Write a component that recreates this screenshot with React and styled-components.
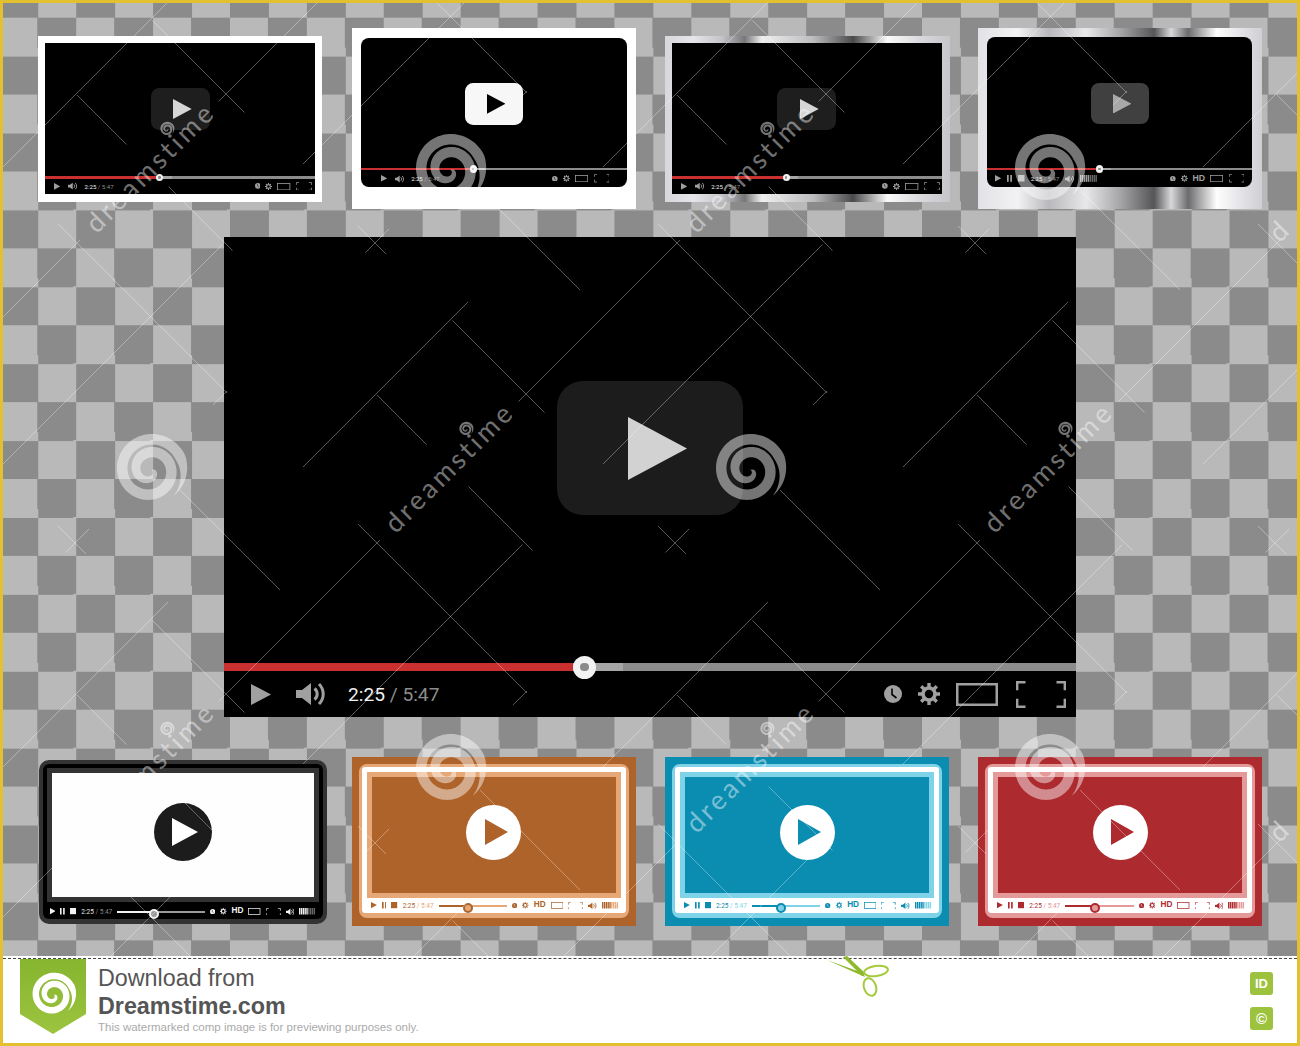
import React from "react";
import styled, { createGlobalStyle } from "styled-components";

const u = (n) => `calc(${n}px * var(--u))`;

const Global = createGlobalStyle`
  html, body { margin: 0; padding: 0; background: #fff; }
  * { box-sizing: border-box; }
`;

/* ---------- page ---------- */
const Page = styled.div`
  width: 1300px;
  height: 1046px;
  border: 3px solid #e3c02f;
  display: flex;
  flex-direction: column;
  background: #fff;
  font-family: "Liberation Sans", Arial, sans-serif;
  overflow: hidden;
`;
const Canvas = styled.main`
  position: relative;
  height: 953px;
  flex: none;
  padding-top: 25px;
  display: flex;
  flex-direction: column;
  overflow: hidden;
  background: repeating-conic-gradient(#8b8b8b 0 25%, #b9b9b9 0 50%) -3.7px 14.7px / 76.9px 76.9px;
`;
const TileRow = styled.section`
  display: grid;
  grid-template-columns: repeat(4, 313.33px);
  align-items: center;
  padding-left: ${(p) => p.$left}px;
  height: ${(p) => p.$h}px;
  margin-bottom: ${(p) => p.$after || 0}px;
  flex: none;
`;
const HeroSlot = styled.div`
  width: 852px;
  height: 480px;
  margin: 0 auto 40px;
  flex: none;
`;

/* ---------- top thumbnails ---------- */
const Frame = styled.div`
  width: ${(p) => p.$w}px;
  height: ${(p) => p.$h}px;
  padding: ${(p) => p.$pad};
  background: ${(p) => p.$bg};
`;

/* ---------- player ---------- */
const Player = styled.div`
  --u: ${(p) => p.$u};
  width: 100%;
  height: 100%;
  display: flex;
  flex-direction: column;
  background: #000;
  border-radius: ${(p) => p.$radius || 0}px;
  overflow: hidden;
`;
const Stage = styled.div`
  flex: 1;
  display: flex;
  align-items: center;
  justify-content: center;
  padding-top: ${(p) => u(p.$top || 0)};
  padding-bottom: ${u(4)};
`;
const BigButton = styled.div`
  width: ${u(186)};
  height: ${u(134)};
  border-radius: ${u(26)};
  background: ${(p) => p.$bg};
  color: ${(p) => p.$fg};
  display: flex;
  align-items: center;
  justify-content: center;
  padding-left: ${u(14)};
`;
const Track = styled.div`
  position: relative;
  flex: none;
  height: ${u(8)};
  background: #8c8c8c;
`;
const Buffered = styled.div`
  position: absolute;
  left: 0;
  top: 0;
  bottom: 0;
  width: 46.8%;
  background: #a6a6a6;
`;
const Played = styled.div`
  position: absolute;
  left: 0;
  top: 0;
  bottom: 0;
  width: 41%;
  background: #c9302f;
`;
const Knob = styled.div`
  position: absolute;
  left: 42.3%;
  top: 50%;
  width: ${u(23)};
  height: ${u(23)};
  margin: ${u(-11.5)} 0 0 ${u(-11.5)};
  border-radius: 50%;
  background: #f2f2f2;
  display: flex;
  align-items: center;
  justify-content: center;
  &::after {
    content: "";
    width: 36%;
    height: 36%;
    border-radius: 50%;
    background: #8a8a8a;
  }
`;
const Controls = styled.div`
  flex: none;
  height: ${(p) => u(p.$h)};
  padding: 0 ${(p) => u(p.$pr)} 0 ${(p) => u(p.$pl)};
  display: flex;
  align-items: center;
  justify-content: space-between;
  color: #a0a0a0;
`;
const Group = styled.div`
  display: flex;
  align-items: center;
  gap: ${(p) => u(p.$gap)};
`;
const Glyph = styled.svg`
  display: block;
  flex: none;
  width: ${(p) => u(p.$w)};
  height: ${(p) => u(p.$h)};
  margin-left: ${(p) => u(p.$ml || 0)};
  fill: currentColor;
`;
const Time = styled.span`
  font-family: Roboto, "Liberation Sans", sans-serif;
  font-size: ${(p) => u(p.$size || 19.2)};
  margin-left: ${(p) => u(p.$ml || 0)};
  white-space: nowrap;
  flex: none;
  color: ${(p) => p.$fg || "#f0f0f0"};
`;
const TimeRest = styled.span`
  color: ${(p) => p.$fg || "#8c8c8c"};
`;
const Hd = styled.span`
  font-family: "Liberation Sans", sans-serif;
  font-weight: 700;
  font-size: ${u(28)};
  line-height: 1;
  flex: none;
`;

/* ---------- bottom tiles ---------- */
const Tile = styled.div`
  width: ${(p) => p.$w}px;
  height: ${(p) => p.$h}px;
  padding: ${(p) => p.$pad};
  background: ${(p) => p.$bg};
  border-radius: ${(p) => p.$radius || 0}px;
`;
const Ring = styled.div`
  height: 100%;
  border: ${(p) => p.$bw}px solid ${(p) => p.$c};
  border-bottom-width: ${(p) => p.$bb}px;
  border-radius: ${(p) => p.$radius}px;
`;
const Bezel = styled.div`
  --u: ${(p) => p.$u};
  height: 100%;
  display: flex;
  flex-direction: column;
  background: ${(p) => p.$bg};
  border-radius: 3px;
  padding-top: ${(p) => p.$m}px;
`;
const Screen = styled.div`
  flex: 1;
  margin: 0 ${(p) => p.$m}px;
  border: 5px solid ${(p) => p.$ring};
  background: ${(p) => p.$fill};
  display: flex;
  align-items: center;
  justify-content: center;
  padding-bottom: 6px;
`;
const Circle = styled.div`
  width: ${(p) => p.$d}px;
  height: ${(p) => p.$d}px;
  border-radius: 50%;
  background: ${(p) => p.$bg};
  color: ${(p) => p.$fg};
  display: flex;
  align-items: center;
  justify-content: center;
  padding-left: 5px;
`;
const Strip = styled.div`
  flex: none;
  height: ${(p) => p.$h}px;
  display: flex;
  align-items: center;
  gap: ${u(17)};
  padding: ${(p) => p.$pt || 0}px ${(p) => p.$pr}px 0 ${(p) => p.$pl}px;
  color: ${(p) => p.$fg};
`;
const Slider = styled.div`
  position: relative;
  flex: 1;
  height: 2px;
  background: ${(p) => p.$rest};
  &::before {
    content: "";
    position: absolute;
    left: 0;
    top: 0;
    bottom: 0;
    width: 40%;
    background: ${(p) => p.$fill};
  }
  &::after {
    content: "";
    position: absolute;
    left: 40%;
    top: 50%;
    width: 6px;
    height: 6px;
    margin: -3px 0 0 -3px;
    border-radius: 50%;
    background: ${(p) => p.$rest};
    border: 2px solid ${(p) => p.$fill};
  }
`;

/* ---------- download bar ---------- */
const DownloadBar = styled.footer`
  position: relative;
  flex: 1;
  padding-top: 2px;
  background: #fff;
`;
const BarInner = styled.div`
  height: 100%;
  border-top: 1px dashed #444;
  display: flex;
  align-items: flex-start;
  padding: 0 24px 0 17px;
`;
const Ribbon = styled.svg`
  display: block;
  flex: none;
  width: 66px;
  height: 75px;
`;
const BarText = styled.div`
  margin-left: 12px;
  flex: 1;
  color: #555;
  padding-top: 5px;
`;
const BarLine = styled.div`
  font-size: ${(p) => p.$size}px;
  font-weight: ${(p) => p.$weight || 400};
  color: ${(p) => p.$color || "#555"};
  line-height: ${(p) => p.$lh}px;
  white-space: nowrap;
`;
const Badges = styled.div`
  flex: none;
  display: flex;
  flex-direction: column;
  gap: 12px;
  padding-top: 13px;
`;
const Badge = styled.div`
  width: 23px;
  height: 23px;
  border-radius: 3px;
  background: #9dc23d;
  color: #fff;
  font-weight: 700;
  font-size: ${(p) => p.$size}px;
  display: flex;
  align-items: center;
  justify-content: center;
`;
const Scissors = styled.svg`
  position: absolute;
  left: 824px;
  top: -2px;
  width: 64px;
  height: 46px;
`;

/* ---------- watermark ---------- */
const MarkLayer = styled.svg`
  position: absolute;
  left: -3px;
  top: -3px;
  width: 1300px;
  height: 1046px;
  pointer-events: none;
  z-index: 3;
`;
const MarkWord = styled.span`
  position: absolute;
  z-index: 3;
  width: ${(p) => p.$w}px;
  text-align: center;
  font-family: Lato, "Noto Sans", sans-serif;
  font-size: 27px;
  line-height: ${(p) => p.$lh}px;
  letter-spacing: ${(p) => p.$track}px;
  color: rgba(255, 255, 255, 0.46);
  transform: rotate(-45deg);
  pointer-events: none;
  white-space: nowrap;
`;

/* ---------- icons ---------- */
const PlayGlyph = ({ w = 20, h = 21 }) => (
  <Glyph $w={w} $h={h} viewBox="0 0 20 21" preserveAspectRatio="none">
    <polygon points="0,0 20,10.5 0,21" />
  </Glyph>
);
const Pause = () => (
  <Glyph $w={16} $h={22} viewBox="0 0 16 22">
    <rect x="0" width="5.5" height="22" />
    <rect x="10.5" width="5.5" height="22" />
  </Glyph>
);
const Stop = () => (
  <Glyph $w={21} $h={21} viewBox="0 0 21 21">
    <rect width="21" height="21" />
  </Glyph>
);
const Speaker = () => (
  <Glyph $w={30} $h={26} viewBox="0 0 30 26">
    <path d="M0 9h6l9-7v22l-9-7H0z" />
    <path d="M18.5 7.5a7 7 0 0 1 0 11M23 3a14 14 0 0 1 0 20" fill="none" stroke="currentColor" strokeWidth="3" />
  </Glyph>
);
const Clock = ({ hand = "#000" }) => (
  <Glyph $w={18} $h={18} viewBox="0 0 18 18">
    <circle cx="9" cy="9" r="9" />
    <path d="M8 3.5v6l4.5 3.5" fill="none" stroke={hand} strokeWidth="1.6" />
  </Glyph>
);
const Gear = () => (
  <Glyph $w={22} $h={22} viewBox="0 0 22 22">
    <circle cx="11" cy="11" r="6" fill="none" stroke="currentColor" strokeWidth="3.6" />
    <g stroke="currentColor" strokeWidth="3.4">
      <path d="M11 0v4M11 18v4M0 11h4M18 11h4M3.2 3.2l2.8 2.8M16 16l2.8 2.8M18.8 3.2 16 6M6 16l-2.8 2.8" />
    </g>
  </Glyph>
);
const Wide = () => (
  <Glyph $w={42} $h={23} viewBox="0 0 42 23">
    <rect x="1.25" y="1.25" width="39.5" height="20.5" fill="none" stroke="currentColor" strokeWidth="2.5" />
  </Glyph>
);
const Corners = ({ ml = 0 }) => (
  <Glyph $w={50} $h={27} $ml={ml} viewBox="0 0 50 27">
    <path
      d="M9.5 1.2H1.2v8M1.2 17.8v8h8.3M40.5 1.2h8.3v8M48.8 17.8v8h-8.3"
      fill="none"
      stroke="currentColor"
      strokeWidth="2.4"
    />
  </Glyph>
);
const Bars = ({ dim }) => (
  <Glyph $w={58} $h={22} viewBox="0 0 56 22" preserveAspectRatio="none">
    {[0, 6, 12, 18, 24, 30, 36, 42, 48].map((x, i) => (
      <rect key={x} x={x} width="4.5" height="22" fill={i < 5 ? "currentColor" : dim} />
    ))}
  </Glyph>
);

const HeroControls = ({ h = 46, pl = 27, pr = 10, extended = false, leftGap = 25 }) => (
  <Controls $h={h} $pl={pl} $pr={pr}>
    <Group $gap={leftGap}>
      <PlayGlyph />
      {extended && <Pause />}
      {extended && <Stop />}
      {!extended && <Speaker />}
      <Time $ml={extended ? 0 : -3}>
        2:25 <TimeRest>/ 5:47</TimeRest>
      </Time>
      {extended && <Speaker />}
      {extended && <Bars dim="#666" />}
    </Group>
    <Group $gap={16}>
      <Clock />
      <Gear />
      {extended && <Hd>HD</Hd>}
      <Wide />
      <Corners ml={2} />
    </Group>
  </Controls>
);

const Video = ({ scale, radius, btnBg, btnFg, stageTop, ...ctrl }) => (
  <Player $u={scale} $radius={radius}>
    <Stage $top={stageTop}>
      <BigButton $bg={btnBg} $fg={btnFg}>
        <PlayGlyph w={59} h={63} />
      </BigButton>
    </Stage>
    <Track>
      <Buffered />
      <Played />
      <Knob />
    </Track>
    <HeroControls {...ctrl} />
  </Player>
);

const ColorTile = ({ w, h, pad, bg, radius, ringWidth, ringBottom, ring, ringRadius, bezel, m, frame, fill, stripH, stripTop, pl, pr, fg, rest, muted, time, circle, circleBg, circleFg, triangle, hand, dim }) => (
  <Tile $w={w} $h={h} $pad={pad} $bg={bg} $radius={radius}>
    <Ring $bw={ringWidth} $bb={ringBottom} $c={ring} $radius={ringRadius}>
      <Bezel $bg={bezel} $m={m} $u={0.295}>
        <Screen $m={m} $ring={frame} $fill={fill}>
          <Circle $d={circle} $bg={circleBg} $fg={circleFg}>
            <PlayGlyph w={triangle[0] / 0.295} h={triangle[1] / 0.295} />
          </Circle>
        </Screen>
        <Strip $h={stripH} $pt={stripTop} $pl={pl} $pr={pr} $fg={fg}>
          <PlayGlyph />
          <Pause />
          <Stop />
          <Time $fg={time} $size={22}>
            2:25 <TimeRest $fg={muted}>/ 5:47</TimeRest>
          </Time>
          <Slider $fill={fg} $rest={rest} />
          <Clock hand={hand} />
          <Gear />
          <Hd>HD</Hd>
          <Wide />
          <Corners />
          <Speaker />
          <Bars dim={dim} />
        </Strip>
      </Bezel>
    </Ring>
  </Tile>
);

/* ---------- watermark geometry ---------- */
const spiralD = (() => {
  const N = 220;
  const turns = 2.15;
  const end = (47 * Math.PI) / 180;
  const out = [];
  const inn = [];
  for (let i = 0; i <= N; i++) {
    const t = i / N;
    const a = end - 2 * Math.PI * turns * (1 - t);
    const rc = 2 + 33 * Math.pow(t, 0.72);
    const w = 10.5 * Math.min(1, (1 - t) / 0.09) * Math.min(1, 0.4 + t * 1.8);
    out.push([(rc + w / 2) * Math.cos(a), (rc + w / 2) * Math.sin(a)]);
    inn.push([(rc - w / 2) * Math.cos(a), (rc - w / 2) * Math.sin(a)]);
  }
  const pts = out.concat(inn.reverse());
  return "M" + pts.map((p) => `${p[0].toFixed(2)} ${p[1].toFixed(2)}`).join("L") + "Z";
})();

const NE = [
  [170, -166, 164],
  [320, 160, 483],
  [467, 22, 461],
  [18, 164, 192],
  [18, 440, 487],
];
const SE = [
  [18, 172, 271],
  [18, 355, 483],
  [468, 173, 357],
  [468, 584, 640],
  [166, 282, 620],
  [310, 70, 270],
];
const segments = (() => {
  const out = [];
  for (let i = -2; i <= 5; i++) {
    for (let j = -3; j <= 3; j++) {
      const P = 600 * i;
      const Q = 600 * j;
      NE.forEach(([p, a, b]) => out.push([p + P - a - Q, p + P + a + Q, p + P - b - Q, p + P + b + Q]));
      SE.forEach(([q, a, b]) => out.push([a + P - q - Q, a + P + q + Q, b + P - q - Q, b + P + q + Q]));
    }
  }
  return out
    .map((s) => s.map((v) => v / 2))
    .filter((s) => Math.max(s[0], s[2]) > 0 && Math.min(s[0], s[2]) < 1300 && Math.max(s[1], s[3]) > 0 && Math.min(s[1], s[3]) < 960);
})();

const SPIRALS = [
  [150, 470],
  [749, 470],
  [449, 170],
  [1048, 170],
  [449, 770],
  [1048, 770],
];
const WORDS = [
  [150, 167],
  [750, 167],
  [449, 467],
  [1048, 467],
  [150, 767],
  [750, 767],
];
const EDGE_LETTERS = [
  [1275, 228],
  [1275, 828],
];

const Watermark = () => (
  <>
    <MarkLayer viewBox="0 0 1300 1046">
      <g stroke="rgba(255,255,255,0.34)" strokeWidth="1">
        {segments.map((s, i) => (
          <line key={i} x1={s[0]} y1={s[1]} x2={s[2]} y2={s[3]} />
        ))}
      </g>
      <g fill="rgba(255,255,255,0.46)">
        {SPIRALS.map(([x, y]) => (
          <path key={`${x}-${y}`} d={spiralD} transform={`translate(${x} ${y})`} />
        ))}
        {WORDS.map(([x, y]) => (
          <path key={`${x}-${y}`} d={spiralD} transform={`translate(${x + 17} ${y - 38}) scale(0.2)`} />
        ))}
      </g>
    </MarkLayer>
    {WORDS.map(([x, y]) => (
      <MarkWord key={`${x}-${y}`} $w={200} $lh={32} $track={3.2} style={{ left: x - 103, top: y - 19 }}>
        dreamstime
      </MarkWord>
    ))}
    {EDGE_LETTERS.map(([x, y]) => (
      <MarkWord key={y} $w={16} $lh={22} $track={0} style={{ left: x - 8, top: y - 11 }}>
        d
      </MarkWord>
    ))}
  </>
);

const silverA = "linear-gradient(90deg,#d8d8dc 0%,#e6e6ea 10%,#c4c4c8 20%,#77777a 28%,#efeff0 34%,#bdbdc0 52%,#4a4a4c 66%,#fafafa 78%,#d8d8dc 90%,#c6c6ca 100%)";
const silverB = "linear-gradient(90deg,#e2e2e6 0%,#f2f2f4 14%,#b9b9bd 25%,#e8e8ea 38%,#a6a6a9 50%,#555558 62%,#d8d8da 68%,#6c6c6f 74%,#fdfdfd 84%,#e0e0e4 94%,#cfcfd3 100%)";

const COLORS = [
  { bg: "#ae632a", ring: "#e6a877" },
  { bg: "#0a8db1", ring: "#7fd3e8" },
  { bg: "#ad2a2f", ring: "#e59a9a" },
];

export default function App() {
  return (
    <>
      <Global />
      <Page>
        <Canvas>
          <TileRow $left={35.3} $h={181} $after={28}>
            <Frame $w={284} $h={166} $pad="7px 7px 8px 7px" $bg="#fff">
              <Video scale={0.3169} btnBg="#1e1e1e" btnFg="#d6d6d6" />
            </Frame>
            <Frame $w={284} $h={181} $pad="10px 9px 22px 9px" $bg="#fff">
              <Video scale={0.3122} radius={8} btnBg="#f7f7f7" btnFg="#000" stageTop={11} h={54} pl={65} pr={56} />
            </Frame>
            <Frame $w={285} $h={166} $pad="7px 8px 8px 7px" $bg={silverA}>
              <Video scale={0.3169} btnBg="#1e1e1e" btnFg="#d6d6d6" pr={6} />
            </Frame>
            <Frame $w={284} $h={181} $pad="9px 10px 22px 9px" $bg={silverB}>
              <Video scale={0.311} radius={8} btnBg="#404040" btnFg="#a8a8a8" stageTop={11} h={54} pl={26} pr={26} extended leftGap={19} />
            </Frame>
          </TileRow>
          <HeroSlot>
            <Video scale={1} btnBg="#1c1c1c" btnFg="#d2d2d2" />
          </HeroSlot>
          <TileRow $left={35.5} $h={169}>
            <ColorTile
              w={288}
              h={164}
              pad="4px 4px 5px"
              bg="#333"
              radius={10}
              ringWidth={4}
              ringBottom={0}
              ring="#000"
              ringRadius={6}
              bezel="#000"
              m={0}
              frame="#333"
              fill="#fefefe"
              stripH={17}
              stripTop={3}
              pl={3}
              pr={2}
              fg="#f2f2f2"
              rest="#9a9a9a"
              time="#e8e8e8"
              muted="#888"
              circle={58}
              circleBg="#1c1c1c"
              circleFg="#fff"
              triangle={[26, 28]}
              hand="#000"
              dim="#666"
            />
            {COLORS.map((c) => (
              <ColorTile
                key={c.bg}
                w={284}
                h={169}
                pad="7px 7px 8px"
                bg={c.bg}
                ringWidth={3}
                ringBottom={5}
                ring={c.ring}
                ringRadius={8}
                bezel="#fff"
                m={5}
                frame={c.ring}
                fill={c.bg}
                stripH={15}
                pl={9}
                pr={7}
                fg={c.bg}
                rest={c.ring}
                time={c.bg}
                muted={c.ring}
                circle={55}
                circleBg="#fff"
                circleFg={c.bg}
                triangle={[23, 26]}
                hand="#fff"
                dim={c.ring}
              />
            ))}
          </TileRow>
          <Watermark />
        </Canvas>
        <DownloadBar>
          <BarInner>
            <Ribbon viewBox="0 0 66 75">
              <defs>
                <linearGradient id="rib" x1="0" y1="0" x2="0" y2="1">
                  <stop offset="0" stopColor="#86b52f" />
                  <stop offset="1" stopColor="#9cc43f" />
                </linearGradient>
              </defs>
              <polygon points="0,0 66,0 66,55 33,75 0,55" fill="url(#rib)" />
              <path d={spiralD} fill="#fff" transform="translate(33 36) scale(0.62)" />
            </Ribbon>
            <BarText>
              <BarLine $size={23.3} $lh={28}>Download from</BarLine>
              <BarLine $size={23.3} $lh={28} $weight={700}>Dreamstime.com</BarLine>
              <BarLine $size={11.5} $lh={14} $color="#aaa">This watermarked comp image is for previewing purposes only.</BarLine>
            </BarText>
            <Badges>
              <Badge $size={13}>ID</Badge>
              <Badge $size={15}>©</Badge>
            </Badges>
          </BarInner>
          <Scissors viewBox="0 0 64 46">
            <path d="M0 6 36 19 38 23Z" fill="#8fb92c" />
            <path d="M16 3 20 2 39 20 35 22Z" fill="#8fb92c" />
            <ellipse cx="49" cy="17" rx="12" ry="5" fill="none" stroke="#a5c93f" strokeWidth="2" transform="rotate(-8 49 17)" />
            <ellipse cx="43" cy="33" rx="6" ry="9" fill="none" stroke="#a5c93f" strokeWidth="2" transform="rotate(-20 43 33)" />
          </Scissors>
        </DownloadBar>
      </Page>
    </>
  );
}
